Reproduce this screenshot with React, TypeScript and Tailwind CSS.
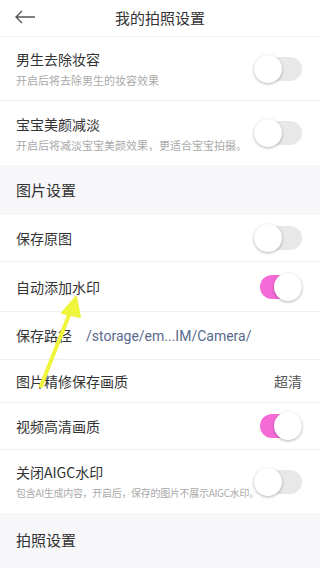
import { ReactNode } from 'react'

const font = { fontFamily: '"Noto Sans CJK SC", "Noto Sans", sans-serif' }

function Toggle({ on }: { on?: boolean }) {
  return (
    <div className="relative w-[48px] h-[28px] shrink-0">
      <div
        className={`absolute top-[2px] bottom-[2px] left-[6px] right-0 rounded-full ${
          on ? 'bg-[#f46ad6]' : 'bg-[#e8e8e8]'
        }`}
      />
      <div
        className={`absolute top-0 w-[28px] h-[28px] rounded-full bg-white shadow-[0_1px_3px_rgba(0,0,0,0.3)] ${
          on ? 'right-0' : 'left-0'
        }`}
      />
    </div>
  )
}

function Row({
  title,
  sub,
  subClass = 'text-[11px]',
  right,
  h,
  last,
}: {
  title: ReactNode
  sub?: string
  subClass?: string
  right?: ReactNode
  h: string
  last?: boolean
}) {
  return (
    <div className={`flex items-center pl-4 pr-[18px] ${h} ${last ? '' : 'border-b border-[#f0f0f0]'}`}>
      <div className="flex-1 min-w-0">
        <div className="text-[14px] text-[#333] leading-[20px]">{title}</div>
        {sub && <div className={`${subClass} text-[#aaa] leading-[16px] mt-[3px] whitespace-nowrap`}>{sub}</div>}
      </div>
      {right}
    </div>
  )
}

function Section({ title, h }: { title: string; h: string }) {
  return (
    <div className={`bg-[#f7f7fa] flex items-center px-4 text-[15px] text-[#333] ${h}`}>{title}</div>
  )
}

export default function App() {
  return (
    <div className="relative w-[320px] h-[568px] overflow-hidden bg-white" style={font}>
      {/* Header */}
      <div className="relative h-[37px] flex items-center justify-center border-b border-[#f2f2f2]">
        <svg className="absolute left-[14px] top-[9px]" width="22" height="16" viewBox="0 0 22 16">
          <path d="M21 8H2M8 2L2 8l6 6" fill="none" stroke="#555" strokeWidth="1.4" />
        </svg>
        <span className="text-[15px] text-[#333]">我的拍照设置</span>
      </div>

      <Row title="男生去除妆容" sub="开启后将去除男生的妆容效果" right={<Toggle />} h="h-[64px]" />
      <Row title="宝宝美颜减淡" sub="开启后将减淡宝宝美颜效果，更适合宝宝拍摄。" right={<Toggle />} h="h-[64px]" last />
      <Section title="图片设置" h="h-[50px]" />
      <Row title="保存原图" right={<Toggle />} h="h-[47px]" />
      <Row title="自动添加水印" right={<Toggle on />} h="h-[50px]" />
      <Row
        title={
          <span>
            保存路径
            <span className="ml-[14px] text-[#5a6a8c]" style={{ fontFamily: 'Roboto, sans-serif' }}>
              /storage/em...IM/Camera/
            </span>
          </span>
        }
        h="h-[48px]"
      />
      <Row title="图片精修保存画质" right={<span className="text-[14px] text-[#555]">超清</span>} h="h-[43px]" />
      <Row title="视频高清画质" right={<Toggle on />} h="h-[47px]" />
      <Row
        title="关闭AIGC水印"
        sub="包含AI生成内容，开启后，保存的图片不展示AIGC水印。"
        subClass="text-[10px] tracking-[-0.3px]"
        right={<Toggle />}
        h="h-[63px]"
        last
      />
      <Section title="拍照设置" h="h-[55px]" />

      {/* annotation arrow */}
      <svg className="absolute left-0 top-0 pointer-events-none" width="320" height="568">
        <path d="M41 386L71 310" stroke="#eef53c" strokeWidth="4" strokeLinecap="round" />
        <path d="M76 297L62 313L80 317Z" fill="#eef53c" stroke="#eef53c" strokeWidth="2" strokeLinejoin="round" />
      </svg>
    </div>
  )
}
